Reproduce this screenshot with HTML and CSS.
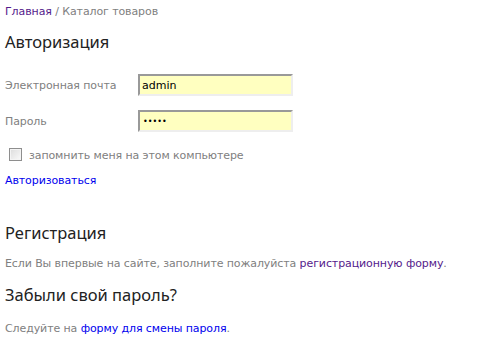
FILE: index.html
```html
<!DOCTYPE html>
<html lang="ru">
<head>
<meta charset="utf-8">
<link rel="stylesheet" href="styles.css">
</head>
<body>
<div class="page">
  <div class="crumbs"><a class="visited" href="#">Главная</a> / Каталог товаров</div>
  <h1 class="title t-auth">Авторизация</h1>
  <form class="form">
    <div class="row"><label class="label">Электронная почта</label><input class="field" type="text" value="admin"></div>
    <div class="row"><label class="label">Пароль</label><input class="field pass" type="password" value="admin"></div>
    <div class="check"><span class="box"></span><span>запомнить меня на этом компьютере</span></div>
    <a class="link submit" href="#">Авторизоваться</a>
  </form>
  <h2 class="title t-reg">Регистрация</h2>
  <p class="text">Если Вы впервые на сайте, заполните пожалуйста <a class="visited" href="#">регистрационную форму</a>.</p>
  <h2 class="title t-forgot">Забыли свой пароль?</h2>
  <p class="text text-last">Следуйте на <a class="link" href="#">форму для смены пароля</a>.</p>
</div>
</body>
</html>
```
FILE: styles.css
```css
html, body { margin: 0; padding: 0; background: #fff; }
body { font-family: "DejaVu Sans", Verdana, sans-serif; font-size: 11px; line-height: 14px; letter-spacing: -0.1px; color: #808080; }
.page { padding: 5px 5px 0; }
a { text-decoration: none; }
.visited { color: #551a8b; }
.link { color: #0000ee; }
.title { font-family: "Noto Sans", sans-serif; font-size: 16.5px; font-weight: normal; letter-spacing: 0; color: #222; margin: 0; line-height: 22px; }
.t-auth { margin-top: 12px; }
.form { display: flex; flex-direction: column; align-items: flex-start; margin-top: 21px; }
.row { display: flex; align-items: flex-start; height: 22px; margin-bottom: 14px; }
.row + .row { margin-bottom: 0; }
.label { width: 133px; padding-top: 5px; }
.field { box-sizing: border-box; width: 155px; height: 22px; margin: 0; padding: 0 2px; background: #ffffc0; border: 2px solid; border-color: #999 #eee #eee #999; font: 11px "DejaVu Sans", sans-serif; color: #000; outline: none; }
.pass { font-size: 8px; padding-left: 3px; }
.check { display: flex; align-items: flex-start; gap: 7px; margin-top: 17px; margin-left: 4px; }
.box { box-sizing: border-box; width: 13px; height: 13px; margin-top: -1px; border: 1px solid #8e8e8e; background: linear-gradient(135deg, #dcdcdc, #fafafa); box-shadow: inset 0 0 0 1px #f4f4f4; }
.submit { margin-top: 11px; }
.t-reg { margin-top: 34px; }
.text { margin: 13px 0 0; }
.t-forgot { margin-top: 13px; }
.text-last { margin-top: 16px; }
```
